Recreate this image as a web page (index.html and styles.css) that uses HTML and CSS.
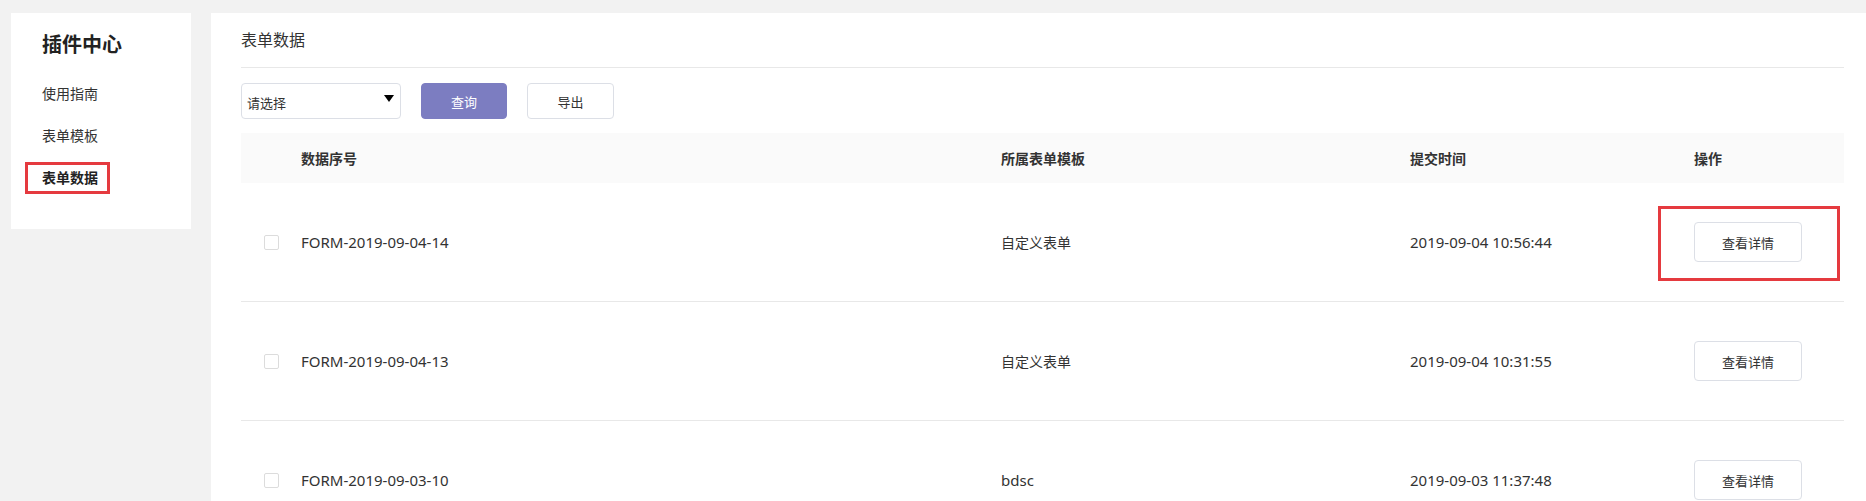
FILE: index.html
```html
<!DOCTYPE html>
<html lang="zh-CN">
<head>
<meta charset="utf-8">
<title>表单数据</title>
<link rel="stylesheet" href="styles.css">
</head>
<body>
<div class="layout">
  <aside class="sidebar">
    <h1 class="side-title">插件中心</h1>
    <ul class="menu">
      <li class="menu-item">使用指南</li>
      <li class="menu-item">表单模板</li>
      <li class="menu-item active"><span class="mark">表单数据</span></li>
    </ul>
  </aside>
  <main class="panel">
    <div class="panel-title">表单数据</div>
    <div class="toolbar">
      <div class="select"><span class="select-text">请选择</span><span class="caret"></span></div>
      <button class="btn btn-primary">查询</button>
      <button class="btn btn-default">导出</button>
    </div>
    <div class="table">
      <div class="row head">
        <div class="cell c-check"></div>
        <div class="cell">数据序号</div>
        <div class="cell">所属表单模板</div>
        <div class="cell">提交时间</div>
        <div class="cell">操作</div>
      </div>
      <div class="row">
        <div class="cell c-check"><span class="checkbox"></span></div>
        <div class="cell num">FORM-2019-09-04-14</div>
        <div class="cell">自定义表单</div>
        <div class="cell num">2019-09-04 10:56:44</div>
        <div class="cell"><button class="btn btn-detail marked">查看详情</button></div>
      </div>
      <div class="row">
        <div class="cell c-check"><span class="checkbox"></span></div>
        <div class="cell num">FORM-2019-09-04-13</div>
        <div class="cell">自定义表单</div>
        <div class="cell num">2019-09-04 10:31:55</div>
        <div class="cell"><button class="btn btn-detail">查看详情</button></div>
      </div>
      <div class="row">
        <div class="cell c-check"><span class="checkbox"></span></div>
        <div class="cell num">FORM-2019-09-03-10</div>
        <div class="cell num">bdsc</div>
        <div class="cell num">2019-09-03 11:37:48</div>
        <div class="cell"><button class="btn btn-detail">查看详情</button></div>
      </div>
    </div>
  </main>
</div>
</body>
</html>
```
FILE: styles.css
```css
* { box-sizing: border-box; }
html, body { margin: 0; padding: 0; }
body {
  background: #f2f2f2;
  font-family: "Noto Sans", "Noto Sans CJK SC", sans-serif;
  color: #333;
  font-size: 14px;
  overflow: hidden;
  height: 501px;
}
.layout {
  display: flex;
  align-items: flex-start;
  gap: 20px;
  padding: 13px 0 0 11px;
  height: 501px;
}
.sidebar {
  width: 180px;
  height: 216px;
  background: #fff;
  padding: 22px 0 0 31px;
}
.side-title {
  margin: 0;
  font-size: 20px;
  font-weight: 700;
  line-height: 20px;
  color: #222;
}
.menu {
  list-style: none;
  margin: 0;
  padding: 0;
  margin-top: 18px;
}
.menu-item {
  height: 42px;
  line-height: 42px;
  font-size: 14px;
  color: #333;
}
.menu-item.active { font-weight: 700; color: #222; }
.mark { position: relative; }
.mark::after {
  content: "";
  position: absolute;
  left: -17px;
  right: -12px;
  top: -6px;
  bottom: -7px;
  border: 3px solid #e53a3f;
}
.panel {
  flex: 1;
  background: #fff;
  height: 488px;
  padding: 0 22px 0 30px;
}
.panel-title {
  height: 55px;
  line-height: 54px;
  font-size: 16px;
  color: #333;
  border-bottom: 1px solid #e8e8e8;
}
.toolbar {
  display: flex;
  align-items: center;
  gap: 20px;
  margin-top: 15px;
  margin-bottom: 14px;
  height: 36px;
}
.select {
  width: 160px;
  height: 36px;
  border: 1px solid #dcdfe6;
  border-radius: 4px;
  display: flex;
  align-items: center;
  justify-content: space-between;
  padding: 2px 6px 0 5px;
}
.select-text { font-size: 13px; color: #333; }
.caret {
  width: 0;
  height: 0;
  border-left: 5px solid transparent;
  border-right: 5px solid transparent;
  border-top: 7px solid #000;
  margin-top: -7px;
}
.btn {
  font-family: inherit;
  font-size: 13px;
  height: 36px;
  border-radius: 4px;
  cursor: pointer;
  padding: 0;
}
.btn-primary {
  width: 86px;
  background: #7c7dc1;
  border: 1px solid #7c7dc1;
  color: #fff;
}
.btn-default {
  width: 87px;
  background: #fff;
  border: 1px solid #dcdfe6;
  color: #333;
}
.table { width: 1603px; }
.row {
  display: grid;
  grid-template-columns: 60px 700px 409px 284px 150px;
  align-items: center;
  height: 119px;
  border-bottom: 1px solid #e8e8e8;
}
.row.head {
  height: 50px;
  background: #fafafa;
  border-bottom: none;
  font-weight: 700;
  color: #333;
}
.cell { font-size: 14px; }
.cell.num { font-size: 15px; }
.c-check { padding-left: 23px; display: flex; align-items: center; }
.checkbox {
  display: inline-block;
  width: 15px;
  height: 15px;
  border: 1px solid #dcdcdc;
  border-radius: 2px;
  background: #fff;
}
.btn-detail {
  width: 108px;
  height: 40px;
  background: #fff;
  border: 1px solid #dcdfe6;
  color: #333;
  font-size: 13px;
}
.marked { position: relative; }
.marked::after {
  content: "";
  position: absolute;
  left: -37px;
  right: -39px;
  top: -17px;
  bottom: -20px;
  border: 3px solid #e53a3f;
}
```
